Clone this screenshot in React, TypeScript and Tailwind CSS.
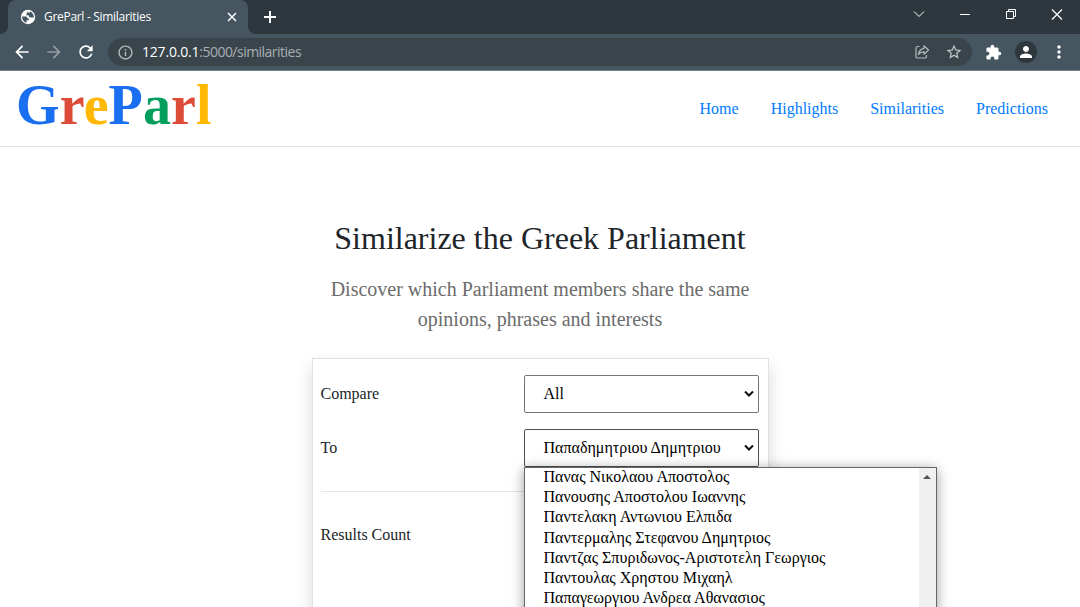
import React from "react";
import {
  MdArrowBack,
  MdArrowForward,
  MdExtension,
  MdInfoOutline,
  MdMoreVert,
  MdPerson,
  MdRefresh,
  MdStarBorder,
} from "react-icons/md";

const logo = [
  ["G", "text-[#1a6ff0]"],
  ["r", "text-[#dd4b39]"],
  ["e", "text-[#ffb803]"],
  ["P", "text-[#1a6ff0]"],
  ["a", "text-[#049f5c]"],
  ["r", "text-[#dd4b39]"],
  ["l", "text-[#ffb803]"],
];

const members = [
  "Πανας Νικολαου Αποστολος",
  "Πανουσης Αποστολου Ιωαννης",
  "Παντελακη Αντωνιου Ελπιδα",
  "Παντερμαλης Στεφανου Δημητριος",
  "Παντζας Σπυριδωνος-Αριστοτελη Γεωργιος",
  "Παντουλας Χρηστου Μιχαηλ",
  "Παπαγεωργιου Ανδρεα Αθανασιος",
];

function Globe() {
  return (
    <svg viewBox="0 0 16 16" className="size-4" fill="none">
      <circle cx="8" cy="8" r="7.200" fill="white" />
      <path
        d="M2 7.600h3.800c1.400 0 1.600 1 1.600 2h1.400v1.700H6.600v2.500C3.800 13.300 2 11 2 7.600Z"
        fill="#455660"
      />
      <path
        d="M7.200 2.300c-.4 1.200.3 2-.8 2.600v1.300h2.200c.2 1.500.9 2.200 2.400 2.200h2.900C13.900 5.500 12.300 3.200 9.900 2.400v1.100H7.800Z"
        fill="#455660"
      />
    </svg>
  );
}

function TabStrip() {
  return (
    <div className="flex h-[34px] shrink-0 bg-[#2d373d] text-white">
      <div className="w-2 bg-[#455660]">
        <div className="h-full w-2 rounded-br-lg bg-[#2d373d]" />
      </div>
      <div className="flex h-full w-[240px] items-center rounded-t-lg bg-[#455660] pr-[10px] pl-3">
        <Globe />
        <span className="ml-2 flex-1 font-['Open_Sans',sans-serif] text-[12px] leading-4 tracking-[-0.3px] whitespace-nowrap">
          GreParl - Similarities
        </span>
        <svg viewBox="0 0 12 12" className="size-3" stroke="white" strokeWidth="1.5">
          <path d="M2 2 10 10M10 2 2 10" />
        </svg>
      </div>
      <div className="w-2 bg-[#455660]">
        <div className="h-full w-2 rounded-bl-lg bg-[#2d373d]" />
      </div>
      <svg viewBox="0 0 14 14" className="mt-[10px] ml-[7px] size-[14px]" stroke="white" strokeWidth="2">
        <path d="M7 1v12M1 7h12" />
      </svg>
      <svg
        viewBox="0 0 184 28"
        className="ml-auto h-7 w-[184px]"
        fill="none"
        stroke="white"
        strokeWidth="1"
      >
        <path d="M18 11.500l5 5 5-5" />
        <path d="M64 14.500h10" />
        <path d="M110.500 11.500h7v7h-7zM112.500 11.500v-2h7v7h-2" />
        <path d="M156 9.500l10 10M166 9.500l-10 10" strokeWidth="1.200" />
      </svg>
    </div>
  );
}

function Toolbar() {
  return (
    <div className="flex h-[37px] shrink-0 items-center border-b border-[#74808a] bg-[#455660] text-white">
      <MdArrowBack className="ml-3 size-5" />
      <MdArrowForward className="ml-3 size-5 text-[#939da2]" />
      <MdRefresh className="ml-3 size-5" />
      <div className="ml-3 flex h-7 w-[864px] items-center rounded-full bg-[#39444b] pl-[9px]">
        <MdInfoOutline className="size-[17px] text-[#b5babd]" />
        <span className="ml-2 font-['Open_Sans',sans-serif] text-[14px] leading-5 whitespace-nowrap text-[#a9afb3]">
          <span className="tracking-[-0.2px] text-white">127.0.0.1</span>
          <span className="tracking-[-0.52px]">:5000/similarities</span>
        </span>
        <svg
          viewBox="0 0 16 16"
          className="mr-[15px] ml-auto size-4"
          fill="none"
          stroke="#b5babd"
          strokeWidth="1.200"
        >
          <path d="M5.500 2.500H3.500A1.500 1.500 0 0 0 2 4v8.500A1.500 1.500 0 0 0 3.500 14H11a1.500 1.500 0 0 0 1.500-1.500V11" />
          <path
            d="M10 1.800 14.500 6 10 10.200V7.800C7.500 7.800 5.800 8.600 4.500 10.500 5 7 7 4.700 10 4.300Z"
            strokeLinejoin="round"
          />
        </svg>
        <MdStarBorder className="mr-[9px] size-[18px] text-[#c3c7c9]" />
      </div>
      <MdExtension className="ml-[13px] size-[17px]" />
      <span className="ml-[13px] flex size-[22px] items-center justify-center rounded-full bg-[#2d373d]">
        <MdPerson className="size-[18px]" />
      </span>
      <MdMoreVert className="ml-3 size-5" />
    </div>
  );
}

function Select({ value, active = false }: { value: string; active?: boolean }) {
  return (
    <div
      className={
        "flex h-[38px] w-[235px] items-center justify-between rounded-[2px] border bg-white pr-1 pl-[19px] whitespace-nowrap text-black " +
        (active ? "border-[#4f4f4f]" : "border-[#767676]")
      }
    >
      <span>{value}</span>
      <svg viewBox="0 0 10 8" className="h-2 w-[10px]" fill="none" stroke="#101010" strokeWidth="2">
        <path d="M1 1.500 5 5.500 9 1.500" />
      </svg>
    </div>
  );
}

function MemberList() {
  return (
    <div className="absolute top-[38px] left-0 z-10 flex h-[300px] w-[413px] border border-[#666] bg-white text-black shadow-[0_2px_12px_rgba(0,0,0,0.4)]">
      <ul className="flex-1 pl-[19px]">
        {members.map((name) => (
          <li key={name} className="h-[20.2px] leading-[18px] tracking-[0.02px] whitespace-nowrap">
            {name}
          </li>
        ))}
      </ul>
      <div className="flex w-[17px] justify-center bg-[#f0f0f0] pt-[7px]">
        <svg viewBox="0 0 8 4" className="h-1 w-2" fill="#505050">
          <path d="M0 4 4 0 8 4Z" />
        </svg>
      </div>
    </div>
  );
}

export default function App() {
  return (
    <div className="flex h-[607px] w-[1080px] flex-col overflow-hidden bg-white font-['Liberation_Serif',serif] text-[16px] leading-6 text-[#212529]">
      <TabStrip />
      <Toolbar />
      <header className="flex h-[76px] shrink-0 items-start justify-between border-b border-[#dee2e6] pr-8 pl-4">
        <div className="pt-[1px] text-[56px] leading-[66px] font-bold tracking-[0.1px]">
          {logo.map(([letter, color], i) => (
            <span key={i} className={color}>
              {letter}
            </span>
          ))}
        </div>
        <nav className="flex gap-8 pt-[26px] text-[#007bff]">
          <a>Home</a>
          <a>Highlights</a>
          <a>Similarities</a>
          <a>Predictions</a>
        </nav>
      </header>
      <main className="flex flex-col items-center">
        <h1 className="mt-[71px] text-[32px] leading-[40px] whitespace-nowrap">Similarize the Greek Parliament</h1>
        <p className="mt-4 text-center text-[20px] leading-[30px] whitespace-nowrap text-[#6c6c6c]">
          Discover which Parliament members share the same
          <br />
          opinions, phrases and interests
        </p>
        <section className="mt-6 h-[400px] w-[457px] border border-[#dee2e6] bg-white px-2 pt-4 shadow-[0_8px_16px_rgba(0,0,0,0.15)]">
          <div className="flex h-[38px] items-center justify-between pr-[1px]">
            <span>Compare</span>
            <Select value="All" />
          </div>
          <div className="mt-4 flex h-[38px] items-center justify-between pr-[1px]">
            <span>To</span>
            <div className="relative">
              <Select value="Παπαδημητριου Δημητριου" active />
              <MemberList />
            </div>
          </div>
          <hr className="mt-6 border-[#e3e5e6]" />
          <div className="mt-[31px]">Results Count</div>
        </section>
      </main>
    </div>
  );
}
